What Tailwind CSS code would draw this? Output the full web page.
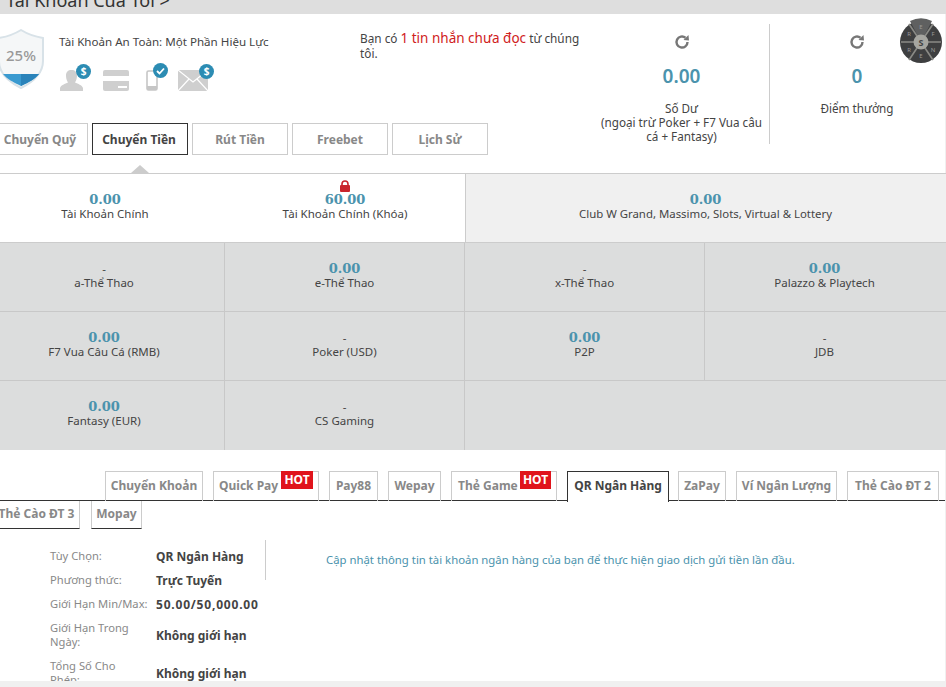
<!DOCTYPE html>
<html lang="vi">
<head>
  <meta charset="UTF-8">
  <title>Tài Khoản Của Tôi</title>
  <script src="https://cdn.jsdelivr.net/npm/@tailwindcss/browser@4"></script>
</head>
<body class="bg-[#f0f0f0] overflow-hidden font-['Noto_Sans','DejaVu_Sans',sans-serif] text-[12px] text-[#444]">
<div class="w-[946px] h-[687px] overflow-hidden flex flex-col">

  <!-- Title bar -->
  <div class="h-[14px] bg-[#dedede] overflow-hidden relative shrink-0">
    <div class="text-[18px] leading-[20px] text-[#333] ml-[6px] -mt-[10px]">Tài Khoản Của Tôi &gt;</div>
  </div>

  <!-- Summary -->
  <div class="h-[159px] bg-white w-[945px] relative flex shrink-0">
    <!-- security -->
    <div class="w-[340px] h-full relative shrink-0">
      <svg class="absolute -left-[3px] top-[15px]" width="50" height="60" viewBox="0 0 50 60">
        <path d="M24 1 C32 6 40 8 46 9 L46 32 C46 45 36 53 24 59 C12 53 2 45 2 32 L2 9 C8 8 16 6 24 1Z" fill="#f5f7f8" stroke="#d8e2e8" stroke-width="2"/>
        <path d="M6 45 L42 45 C38 50 32 53 24 57 C16 53 10 50 6 45Z" fill="#3a9ad0"/>
        <path d="M24 45 L42 45 C38 50 32 53 24 57Z" fill="#2a83ba"/>
        <text x="24" y="32" text-anchor="middle" font-size="15" font-weight="500" fill="#999" font-family="Noto Sans">25%</text>
      </svg>
      <div class="absolute left-[59px] top-[20px] leading-[16px] whitespace-nowrap text-[#444] text-[11.6px]">Tài Khoản An Toàn: Một Phần Hiệu Lực</div>

      <svg class="absolute left-[60px] top-[56px]" width="23" height="21" viewBox="0 0 23 21"><path d="M0 21 V18 C1 15 5 14 8 12.5 C6.5 10 6 8 6 5.5 C6 2 8 0 11.5 0 C15 0 17 2 17 5.5 C17 8 16.5 10 15 12.5 C18 14 22 15 23 18 V21Z" fill="#cfcfcf"/></svg>
      <div class="absolute left-[76px] top-[50px] w-[15px] h-[15px] rounded-full bg-[#2c8cb3] text-white text-[10px] font-bold leading-[15px] text-center">$</div>
      <svg class="absolute left-[103px] top-[56px]" width="26" height="21" viewBox="0 0 26 21"><rect width="26" height="21" rx="2" fill="#cfcfcf"/><rect y="6" width="26" height="5" fill="#fff"/><rect x="15" y="16" width="9" height="2" fill="#fff"/></svg>
      <svg class="absolute left-[146px] top-[56px]" width="12" height="21" viewBox="0 0 12 21"><rect x="1" y="1" width="10" height="19" rx="1.5" fill="none" stroke="#c6c6c6" stroke-width="1.6"/><rect x="1" y="16" width="10" height="4" fill="#c6c6c6"/></svg>
      <div class="absolute left-[153px] top-[49px] w-[15px] h-[15px] rounded-full bg-[#2c8cb3] flex items-center justify-center"><svg width="9" height="8" viewBox="0 0 9 8"><path d="M1 4 L3.5 6.5 L8 1.5" fill="none" stroke="#fff" stroke-width="1.8"/></svg></div>
      <svg class="absolute left-[178px] top-[56px]" width="30" height="21" viewBox="0 0 30 21"><rect width="30" height="21" fill="#cfcfcf"/><path d="M0 0 L15 12 L30 0 M0 21 L11 9 M30 21 L19 9" fill="none" stroke="#fff" stroke-width="1.2"/></svg>
      <div class="absolute left-[199px] top-[50px] w-[15px] h-[15px] rounded-full bg-[#2c8cb3] text-white text-[10px] font-bold leading-[15px] text-center">$</div>

      <!-- sub tabs -->
      <div class="absolute left-[-4px] top-[109px] flex gap-[4px] font-bold text-[#888] text-[12px]">
        <div class="w-[92px] h-[32px] border border-[#ccc] flex items-center justify-center pt-[2px] pr-[4px]">Chuyển Quỹ</div>
        <div class="w-[96px] h-[32px] border border-[#333] text-[#444] flex items-center justify-center pt-[2px] pr-[2px]">Chuyển Tiền</div>
        <div class="w-[96px] h-[32px] border border-[#ccc] flex items-center justify-center pt-[2px]">Rút Tiền</div>
        <div class="w-[96px] h-[32px] border border-[#ccc] flex items-center justify-center pt-[2px]">Freebet</div>
        <div class="w-[96px] h-[32px] border border-[#ccc] flex items-center justify-center pt-[2px]">Lịch Sử</div>
      </div>
      <div class="absolute left-[131px] top-[151px] w-0 h-0 border-x-[9px] border-x-transparent border-b-[8px] border-b-[#ccc]"></div>
    </div>

    <!-- message -->
    <div class="w-[242px] pt-[17px] pl-[20px] leading-[15px] text-[11.8px] shrink-0 -mr-[2px]">Bạn có <span class="text-[#d0211c] text-[13.5px]">1 tin nhắn chưa đọc</span> từ chúng tôi.</div>

    <!-- balance -->
    <div class="w-[190px] h-[120px] mt-[10px] border-r border-[#ccc] text-center flex flex-col items-center shrink-0 pl-[14px]">
      <svg class="mt-[10px]" width="16" height="16" viewBox="0 0 16 16"><path d="M13.5 8 A5.5 5.5 0 1 1 11.5 3.8" fill="none" stroke="#777" stroke-width="2.4"/><path d="M9.5 6 L15 6.5 L14.5 1Z" fill="#777"/></svg>
      <div class="mt-[14px] text-[19px] leading-[24px] font-semibold text-[#4b93ad]">0.00</div>
      <div class="mt-[13px] leading-[14px] text-[11.7px] whitespace-nowrap">Số Dư<br>(ngoại trừ Poker + F7 Vua câu<br>cá + Fantasy)</div>
    </div>

    <!-- points -->
    <div class="flex-1 h-[120px] mt-[10px] text-center flex flex-col items-center -ml-[1px]">
      <svg class="mt-[10px]" width="16" height="16" viewBox="0 0 16 16"><path d="M13.5 8 A5.5 5.5 0 1 1 11.5 3.8" fill="none" stroke="#777" stroke-width="2.4"/><path d="M9.5 6 L15 6.5 L14.5 1Z" fill="#777"/></svg>
      <div class="mt-[14px] text-[19px] leading-[24px] font-semibold text-[#4b93ad]">0</div>
      <div class="mt-[13px] leading-[14px] text-[11.7px]">Điểm thưởng</div>
    </div>

    <!-- wheel -->
    <svg class="absolute left-[899px] top-[3px]" width="44" height="48" viewBox="0 0 44 48">
      <circle cx="22" cy="25" r="21" fill="#3e3f40"/>
      <path d="M11 4 A24 24 0 0 1 33 4 L22 25Z" fill="#5f6060"/>
      <path d="M22 25 L10 7 M22 25 L34 7 M2 25 H42 M22 25 L10 43 M22 25 L34 43" stroke="#8a8a85" stroke-width="1.6"/>
      <circle cx="22" cy="25" r="7.5" fill="#a6a6a0"/>
      <text x="22" y="28.5" text-anchor="middle" font-size="9" font-weight="700" fill="#444" font-family="Noto Sans">S</text>
      <text x="22" y="12" text-anchor="middle" font-size="6" fill="#999" font-family="Noto Sans">E</text>
      <text x="10" y="19" text-anchor="middle" font-size="6" fill="#999" font-family="Noto Sans">R</text>
      <text x="34" y="19" text-anchor="middle" font-size="6" fill="#999" font-family="Noto Sans">F</text>
      <text x="10" y="35" text-anchor="middle" font-size="6" fill="#999" font-family="Noto Sans">R</text>
      <text x="34" y="35" text-anchor="middle" font-size="6" fill="#999" font-family="Noto Sans">N</text>
      <text x="22" y="41" text-anchor="middle" font-size="6" fill="#999" font-family="Noto Sans">E</text>
    </svg>
  </div>

  <!-- Main wallets -->
  <div class="h-[70px] flex border-y border-[#ccc] shrink-0 bg-white">
    <div class="w-[210px] text-center pt-[19px] leading-[15px]">
      <div class="text-[13px] font-bold text-[#4b93ad] font-['DejaVu_Serif',serif] h-[13px] leading-[14px]">0.00</div>
      <div class="text-[11.5px]">Tài Khoản Chính</div>
    </div>
    <div class="w-[256px] border-r border-[#ccc] text-center pt-[6px] pl-[15px] leading-[15px] flex flex-col items-center">
      <svg width="12" height="12" viewBox="0 0 12 12"><path d="M3 6 V4 A3 3 0 0 1 9 4 V6" fill="none" stroke="#c9252c" stroke-width="1.6"/><rect x="1" y="5" width="10" height="7" rx="1" fill="#c9252c"/></svg>
      <div class="text-[13px] font-bold text-[#4b93ad] font-['DejaVu_Serif',serif] h-[14px] mt-[1px] leading-[14px]">60.00</div>
      <div class="text-[11.5px] -mt-[1px]">Tài Khoản Chính (Khóa)</div>
    </div>
    <div class="flex-1 bg-[#f0f0f0] text-center pt-[19px] leading-[15px] pr-[1px]">
      <div class="text-[13px] font-bold text-[#4b93ad] font-['DejaVu_Serif',serif] h-[13px] leading-[14px]">0.00</div>
      <div class="text-[11.4px]">Club W Grand, Massimo, Slots, Virtual &amp; Lottery</div>
    </div>
  </div>

  <!-- Product wallets -->
  <div class="grid grid-cols-[225px_240px_240px_241px] grid-rows-[69px_69px_69px] bg-[#dcdddd] shrink-0 text-center text-[11.5px] leading-[15px]">
    <div class="border-r border-b border-[#c8c8c8] pt-[19px] pr-[16px]"><div class="h-[13px] leading-[13px]">-</div><div>a-Thể Thao</div></div>
    <div class="border-r border-b border-[#c8c8c8] pt-[19px]"><div class="h-[13px] text-[13px] font-bold text-[#4b93ad] font-['DejaVu_Serif',serif] leading-[14px]">0.00</div><div>e-Thể Thao</div></div>
    <div class="border-r border-b border-[#c8c8c8] pt-[19px]"><div class="h-[13px] leading-[13px]">-</div><div>x-Thể Thao</div></div>
    <div class="border-b border-[#c8c8c8] pt-[19px] pr-[2px]"><div class="h-[13px] text-[13px] font-bold text-[#4b93ad] font-['DejaVu_Serif',serif] leading-[14px]">0.00</div><div>Palazzo &amp; Playtech</div></div>

    <div class="border-r border-b border-[#c8c8c8] pt-[19px] pr-[16px]"><div class="h-[13px] text-[13px] font-bold text-[#4b93ad] font-['DejaVu_Serif',serif] leading-[14px]">0.00</div><div>F7 Vua Câu Cá (RMB)</div></div>
    <div class="border-r border-b border-[#c8c8c8] pt-[19px]"><div class="h-[13px] leading-[13px]">-</div><div>Poker (USD)</div></div>
    <div class="border-r border-b border-[#c8c8c8] pt-[19px]"><div class="h-[13px] text-[13px] font-bold text-[#4b93ad] font-['DejaVu_Serif',serif] leading-[14px]">0.00</div><div>P2P</div></div>
    <div class="border-b border-[#c8c8c8] pt-[19px] pr-[2px]"><div class="h-[13px] leading-[13px]">-</div><div>JDB</div></div>

    <div class="border-r border-[#c8c8c8] pt-[19px] pr-[16px]"><div class="h-[13px] text-[13px] font-bold text-[#4b93ad] font-['DejaVu_Serif',serif] leading-[14px]">0.00</div><div>Fantasy (EUR)</div></div>
    <div class="border-r border-[#c8c8c8] pt-[19px]"><div class="h-[13px] leading-[13px]">-</div><div>CS Gaming</div></div>
    <div></div>
    <div></div>
  </div>

  <!-- Deposit methods -->
  <div class="bg-white h-[231px] w-[945px] shrink-0 overflow-hidden">
    <div class="h-[51px] border-b border-[#333] w-[946px] relative font-bold text-[#888] text-[12px]">
      <div class="absolute left-[105px] top-[21px] w-[98px] h-[30px] border border-b-0 border-[#ccc] flex items-center justify-center pb-[1px]">Chuyển Khoản</div>
      <div class="absolute left-[213px] top-[21px] w-[106px] h-[30px] border border-b-0 border-[#ccc] flex items-center pl-[5px] pb-[1px]">Quick Pay<span class="absolute right-[5px] -top-[1px] bg-[#e0141c] text-white text-[12px] leading-[18px] w-[32px] text-center">HOT</span></div>
      <div class="absolute left-[329px] top-[21px] w-[49px] h-[30px] border border-b-0 border-[#ccc] flex items-center justify-center pb-[1px]">Pay88</div>
      <div class="absolute left-[388px] top-[21px] w-[53px] h-[30px] border border-b-0 border-[#ccc] flex items-center justify-center pb-[1px]">Wepay</div>
      <div class="absolute left-[451px] top-[21px] w-[106px] h-[30px] border border-b-0 border-[#ccc] flex items-center pl-[6px] pb-[1px]">Thẻ Game<span class="absolute right-[5px] -top-[1px] bg-[#e0141c] text-white text-[12px] leading-[18px] w-[31px] text-center">HOT</span></div>
      <div class="absolute left-[567px] top-[21px] w-[102px] h-[31px] border border-b-0 border-[#333] bg-white text-[#444] flex items-center justify-center pb-[2px]">QR Ngân Hàng</div>
      <div class="absolute left-[678px] top-[21px] w-[48px] h-[30px] border border-b-0 border-[#ccc] flex items-center justify-center pb-[1px]">ZaPay</div>
      <div class="absolute left-[736px] top-[21px] w-[101px] h-[30px] border border-b-0 border-[#ccc] flex items-center justify-center pb-[1px]">Ví Ngân Lượng</div>
      <div class="absolute left-[847px] top-[21px] w-[92px] h-[30px] border border-b-0 border-[#ccc] flex items-center justify-center pb-[1px]">Thẻ Cào ĐT 2</div>
    </div>
    <div class="flex gap-[11px] font-bold text-[#888] text-[12px] h-[28px] -ml-[17px]">
      <div class="w-[97px] border border-t-0 border-[#ccc] border-b-[#333] flex items-center justify-center pb-[2px] pl-[10px] whitespace-nowrap">Thẻ Cào ĐT 3</div>
      <div class="w-[51px] border border-t-0 border-[#ccc] border-b-[#333] flex items-center justify-center pb-[2px]">Mopay</div>
    </div>

    <div class="flex mt-[15px]">
      <div class="w-[265px] pl-[50px] shrink-0 text-[11.2px]">
        <div class="flex h-[24px] items-center"><div class="w-[106px] text-[#888]">Tùy Chọn:</div><div class="font-bold text-[#444] text-[12px] pt-[2px]">QR Ngân Hàng</div></div>
        <div class="flex h-[24px] items-center"><div class="w-[106px] text-[#888]">Phương thức:</div><div class="font-bold text-[#444] text-[12px] pt-[2px]">Trực Tuyến</div></div>
        <div class="flex h-[24px] items-center"><div class="w-[106px] text-[#888] whitespace-nowrap">Giới Hạn Min/Max:</div><div class="font-bold text-[#444] text-[12px] tracking-[0.8px] whitespace-nowrap pt-[2px]">50.00/50,000.00</div></div>
        <div class="flex h-[38px] items-center"><div class="w-[106px] text-[#888] leading-[14px]">Giới Hạn Trong<br>Ngày:</div><div class="font-bold text-[#444] text-[12px] pt-[2px]">Không giới hạn</div></div>
        <div class="flex h-[38px] items-center"><div class="w-[106px] text-[#888] leading-[14px]">Tổng Số Cho<br>Phép:</div><div class="font-bold text-[#444] text-[12px] pt-[2px]">Không giới hạn</div></div>
      </div>
      <div class="h-[40px] -mt-[4px] border-l border-[#ccc] pl-[60px] pt-[12px] text-[#4b93ad] text-[11.35px] leading-[16px] whitespace-nowrap">Cập nhật thông tin tài khoản ngân hàng của bạn để thực hiện giao dịch gửi tiền lần đầu.</div>
    </div>
  </div>
</div>
</body>
</html>
